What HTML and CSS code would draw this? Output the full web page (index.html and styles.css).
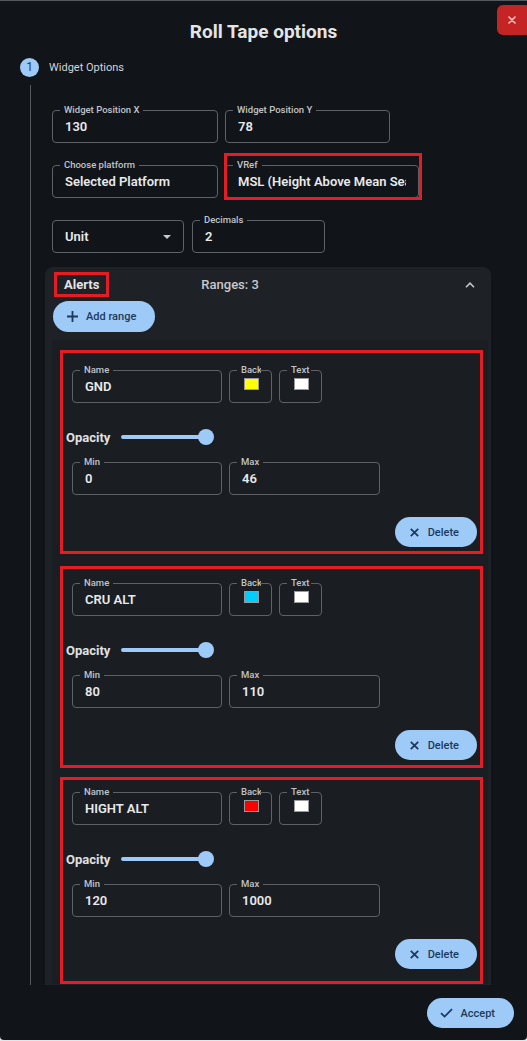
FILE: index.html
```html
<!DOCTYPE html>
<html lang="en">
<head>
  <meta charset="UTF-8">
  <meta name="viewport" content="width=device-width, initial-scale=1.0">
  <title>Roll Tape options</title>
  <link rel="stylesheet" href="styles.css">
</head>
<body>
  <div class="dialog">
    <button class="close-btn" aria-label="Close">
      <svg width="8" height="8" viewBox="0 0 8 8"><path d="M1 1L7 7M7 1L1 7" stroke="#f6caca" stroke-width="1.6" stroke-linecap="round"/></svg>
    </button>
    <h1 class="title">Roll Tape options</h1>

    <div class="step-head">
      <span class="step-num">1</span>
      <span class="step-label">Widget Options</span>
    </div>

    <div class="step-body">
      <div class="row">
        <div class="field f-x"><span class="field-label">Widget Position X</span><span class="field-value">130</span></div>
        <div class="field f-y"><span class="field-label">Widget Position Y</span><span class="field-value">78</span></div>
      </div>
      <div class="row">
        <div class="field f-platform"><span class="field-label">Choose platform</span><span class="field-value">Selected Platform</span></div>
        <div class="field f-vref marked"><span class="field-label">VRef</span><span class="field-value">MSL (Height Above Mean Sea Level)</span></div>
      </div>
      <div class="row row-tight">
        <div class="field f-unit"><span class="field-value">Unit</span><span class="caret"></span></div>
        <div class="field f-dec"><span class="field-label">Decimals</span><span class="field-value">2</span></div>
      </div>

      <div class="alerts">
        <div class="alerts-head">
          <span class="alerts-title">Alerts</span>
          <span class="ranges-count">Ranges: 3</span>
          <svg class="chevron" width="10" height="6" viewBox="0 0 10 6"><path d="M1 5.2L5 1.2L9 5.2" fill="none" stroke="#c4c6ca" stroke-width="1.6"/></svg>
        </div>
        <button class="btn add-btn">
          <svg width="11" height="11" viewBox="0 0 11 11"><path d="M5.5 0V11M0 5.5H11" stroke="#1d3a5c" stroke-width="1.8"/></svg>
          Add range
        </button>

        <div class="range-list">
          <div class="range">
            <div class="range-top">
              <div class="field f-name"><span class="field-label">Name</span><span class="field-value">GND</span></div>
              <div class="field f-color"><span class="field-label clip">Background</span><span class="swatch swatch-yellow"></span></div>
              <div class="field f-color"><span class="field-label clip">Text color</span><span class="swatch swatch-white"></span></div>
            </div>
            <div class="opacity-row">
              <span class="opacity-label">Opacity</span>
              <div class="slider"><span class="thumb"></span></div>
            </div>
            <div class="range-minmax">
              <div class="field f-min"><span class="field-label">Min</span><span class="field-value">0</span></div>
              <div class="field f-max"><span class="field-label">Max</span><span class="field-value">46</span></div>
            </div>
            <div class="range-actions">
              <button class="btn del-btn">
                <svg width="9" height="9" viewBox="0 0 9 9"><path d="M0.8 0.8L8.2 8.2M8.2 0.8L0.8 8.2" stroke="#1d3a5c" stroke-width="1.8"/></svg>
                Delete
              </button>
            </div>
          </div>

          <div class="range">
            <div class="range-top">
              <div class="field f-name"><span class="field-label">Name</span><span class="field-value">CRU ALT</span></div>
              <div class="field f-color"><span class="field-label clip">Background</span><span class="swatch swatch-cyan"></span></div>
              <div class="field f-color"><span class="field-label clip">Text color</span><span class="swatch swatch-white"></span></div>
            </div>
            <div class="opacity-row">
              <span class="opacity-label">Opacity</span>
              <div class="slider"><span class="thumb"></span></div>
            </div>
            <div class="range-minmax">
              <div class="field f-min"><span class="field-label">Min</span><span class="field-value">80</span></div>
              <div class="field f-max"><span class="field-label">Max</span><span class="field-value">110</span></div>
            </div>
            <div class="range-actions">
              <button class="btn del-btn">
                <svg width="9" height="9" viewBox="0 0 9 9"><path d="M0.8 0.8L8.2 8.2M8.2 0.8L0.8 8.2" stroke="#1d3a5c" stroke-width="1.8"/></svg>
                Delete
              </button>
            </div>
          </div>

          <div class="range">
            <div class="range-top">
              <div class="field f-name"><span class="field-label">Name</span><span class="field-value">HIGHT ALT</span></div>
              <div class="field f-color"><span class="field-label clip">Background</span><span class="swatch swatch-red"></span></div>
              <div class="field f-color"><span class="field-label clip">Text color</span><span class="swatch swatch-white"></span></div>
            </div>
            <div class="opacity-row">
              <span class="opacity-label">Opacity</span>
              <div class="slider"><span class="thumb"></span></div>
            </div>
            <div class="range-minmax">
              <div class="field f-min"><span class="field-label">Min</span><span class="field-value">120</span></div>
              <div class="field f-max"><span class="field-label">Max</span><span class="field-value">1000</span></div>
            </div>
            <div class="range-actions">
              <button class="btn del-btn">
                <svg width="9" height="9" viewBox="0 0 9 9"><path d="M0.8 0.8L8.2 8.2M8.2 0.8L0.8 8.2" stroke="#1d3a5c" stroke-width="1.8"/></svg>
                Delete
              </button>
            </div>
          </div>
        </div>
      </div>
    </div>

    <div class="actions">
      <button class="btn accept-btn">
        <svg width="13" height="10" viewBox="0 0 13 10"><path d="M1 5.2L4.6 8.6L12 1.2" fill="none" stroke="#1d3a5c" stroke-width="1.8"/></svg>
        Accept
      </button>
    </div>
  </div>
</body>
</html>
```

FILE: styles.css
```css
body {
  margin: 0;
  background-color: #e6e6e6;
  font-family: Roboto, "Liberation Sans", sans-serif;
}
.dialog {
  position: relative;
  width: 527px;
  height: 1040px;
  box-sizing: border-box;
  background-color: #111418;
  border-top: 1px solid #55585c;
  border-radius: 0 0 4px 4px;
  overflow: hidden;
  color: #e6e7e9;
}
.close-btn {
  position: absolute;
  top: 4px;
  right: -4px;
  width: 34px;
  height: 30px;
  border: none;
  border-radius: 6px;
  background-color: #c42424;
  padding: 0 4px 0 0;
  display: flex;
  align-items: center;
  justify-content: center;
}
.title {
  margin: 0;
  padding-top: 20px;
  font-size: 19px;
  line-height: 22px;
  font-weight: 700;
  text-align: center;
  color: #e4e5e7;
}
.step-head {
  display: flex;
  align-items: center;
  gap: 10px;
  height: 20px;
  margin-top: 14px;
  padding-left: 20px;
}
.step-num {
  width: 19px;
  height: 19px;
  border-radius: 50%;
  background-color: #9ecaf8;
  color: #1d3a5c;
  font-size: 12px;
  line-height: 19px;
  text-align: center;
}
.step-label {
  font-size: 11px;
  color: #d4d5d8;
}
.step-body {
  margin: 8px 36px 0 30px;
  padding: 25px 0 0 14px;
  border-left: 1px solid #55585d;
}
.row {
  display: flex;
  gap: 7px;
  margin: 0 0 22px 7px;
}
.row-tight {
  gap: 8px;
  margin-bottom: 14px;
}

/* outlined fields */
.field {
  position: relative;
  box-sizing: border-box;
  height: 33px;
  padding: 0 12px;
  border: 1px solid #5e6166;
  border-radius: 4px;
  display: flex;
  align-items: center;
}
.field-label {
  position: absolute;
  top: -7px;
  left: 7px;
  padding: 0 4px;
  font-size: 9.5px;
  font-weight: 500;
  line-height: 12px;
  color: #c2c4c8;
  background-color: #111418;
  white-space: nowrap;
}
.field-label.clip {
  width: 16px;
  overflow: hidden;
}
.field-value {
  flex: 1;
  min-width: 0;
  overflow: hidden;
  white-space: nowrap;
  font-size: 13px;
  font-weight: 600;
  color: #e8e9eb;
}
.f-x { width: 166px; }
.f-y { width: 165px; }
.f-platform { width: 166px; }
.f-vref { width: 194px; }
.f-unit { width: 132px; }
.f-dec { width: 133px; }
.f-name { width: 150px; }
.f-color { width: 43px; }
.f-min { width: 150px; }
.f-max { width: 151px; }
.caret {
  width: 0;
  height: 0;
  border-left: 4px solid transparent;
  border-right: 4px solid transparent;
  border-top: 4px solid #c8cacd;
}
.marked::after {
  content: "";
  position: absolute;
  top: -13px;
  left: -2px;
  right: -4px;
  bottom: -3px;
  border: 3px solid #e51c23;
  pointer-events: none;
}

/* buttons */
.btn {
  display: flex;
  align-items: center;
  border: none;
  border-radius: 16px;
  background-color: #9ecaf8;
  color: #1d3a5c;
  font-family: Roboto, "Liberation Sans", sans-serif;
  font-size: 11px;
  font-weight: 500;
}
.add-btn {
  height: 31px;
  margin: 4px 0 0 1px;
  padding: 0 19px 0 14px;
  gap: 8px;
}
.del-btn {
  height: 30px;
  padding: 0 18px 0 15px;
  gap: 9px;
}
.accept-btn {
  height: 30px;
  padding: 0 19px 0 13px;
  gap: 7px;
}

/* alerts panel */
.alerts {
  background-color: #1e2126;
  border-radius: 8px 8px 0 0;
  padding: 5px 3px 1px 7px;
}
.alerts-head {
  display: flex;
  align-items: center;
  margin-left: 2px;
  padding-right: 13px;
}
.alerts-title {
  border: 3px solid #e51c23;
  padding: 0 7px;
  font-size: 13px;
  font-weight: 700;
  line-height: 19px;
  color: #e4e5e7;
}
.ranges-count {
  margin-left: 92px;
  font-size: 13px;
  font-weight: 500;
  color: #c8cacd;
}
.chevron {
  margin-left: auto;
}
.range-list {
  margin-top: 8px;
  padding: 10px 5px 0 8px;
  background-color: #1a1d22;
}
.range {
  box-sizing: border-box;
  height: 204px;
  border: 3px solid #e51c23;
  padding: 17px 3px 4px 9px;
}
.range:nth-child(2) {
  height: 202px;
  margin-top: 12px;
  padding-top: 14px;
}
.range:nth-child(3) {
  height: 207px;
  margin-top: 9px;
  padding-top: 12px;
}
.range .field-label {
  background-color: #1a1d22;
}
.range-top,
.range-minmax {
  display: flex;
  gap: 7px;
}
.swatch {
  width: 20px;
  height: 12px;
  box-sizing: border-box;
  border: 1px solid #9a9a9a;
  margin: 0 0 6px 2px;
}
.swatch-yellow { background-color: #ffff00; }
.swatch-cyan { background-color: #00ccff; }
.swatch-red { background-color: #ff0000; }
.swatch-white { background-color: #ffffff; }
.opacity-row {
  display: flex;
  align-items: center;
  height: 20px;
  margin: 24px 0 15px -6px;
}
.opacity-label {
  font-size: 13px;
  font-weight: 700;
  color: #e0e1e3;
}
.slider {
  position: relative;
  width: 86px;
  height: 4px;
  margin-left: 11px;
  border-radius: 2px;
  background-color: #9ecaf8;
}
.thumb {
  position: absolute;
  top: -6px;
  right: -7px;
  width: 16px;
  height: 16px;
  border-radius: 50%;
  background-color: #9ecaf8;
}
.range-actions {
  display: flex;
  justify-content: flex-end;
  margin-top: 22px;
}
.actions {
  display: flex;
  justify-content: flex-end;
  margin-top: 13px;
  padding-right: 13px;
}
```
